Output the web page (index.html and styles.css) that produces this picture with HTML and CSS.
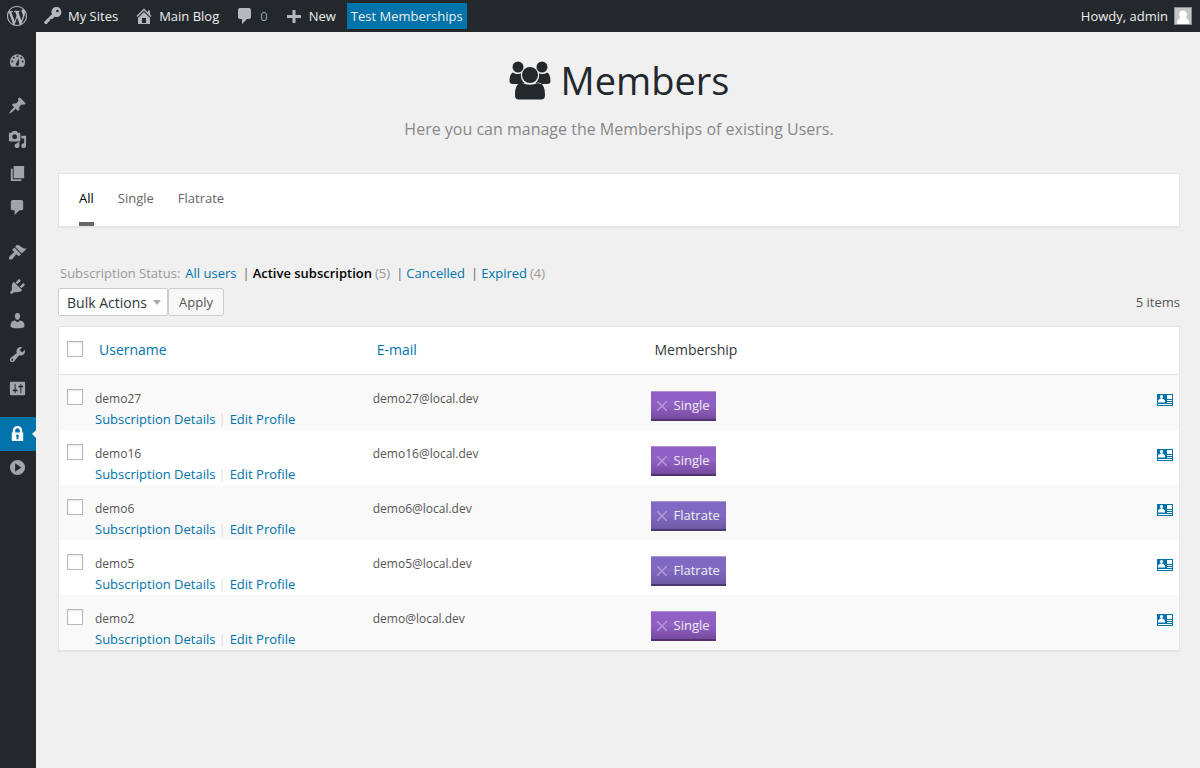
FILE: index.html
```html
<!DOCTYPE html>
<html lang="en">
<head>
<meta charset="utf-8">
<title>Members</title>
<link rel="stylesheet" href="styles.css">
</head>
<body>
<svg class="sprite" aria-hidden="true">
  <symbol id="card" viewBox="0 0 16 12"><path fill="#0073aa" d="M0 0h16v12H0z"/><path fill="#fff" d="M4.500 1a1.500 1.500 0 0 1 1 2.700L5.300 5h1.200L8 6.500V8.500H1V6.500L2.500 5h1.200l-.2-1.300a1.500 1.500 0 0 1 1-2.700zM10 1h5v4h-5zM10 6h5v1h-5zM10 8h5v1h-5zM1 10h14v1H1z"/></symbol>
  <symbol id="comment" viewBox="0 0 20 20"><path d="M5 2h9c1.100 0 2 .9 2 2v7c0 1.100-.9 2-2 2h-2l-5 5v-5H5c-1.100 0-2-.9-2-2V4c0-1.100.9-2 2-2z"/></symbol>
</svg>

<header class="adminbar">
  <nav class="bar-links" aria-label="Toolbar">
    <a class="bar-item wp" href="#" aria-label="About WordPress"><svg class="icon" viewBox="0 0 20 20"><path d="M20 10c0-5.510-4.490-10-10-10C4.480 0 0 4.490 0 10c0 5.520 4.480 10 10 10 5.510 0 10-4.480 10-10zM7.780 15.370L4.370 6.220c.55-.02 1.170-.08 1.170-.08.5-.06.44-1.130-.06-1.110 0 0-1.450.11-2.370.11-.18 0-.37 0-.58-.01C4.120 2.690 6.870 1.110 10 1.110c2.330 0 4.450.87 6.050 2.340-.68-.11-1.650.39-1.650 1.580 0 .74.45 1.360.9 2.100.35.61.55 1.360.55 2.460 0 1.490-1.400 5-1.400 5l-3.030-8.370c.54-.02.82-.17.82-.17.5-.05.44-1.250-.06-1.220 0 0-1.440.12-2.380.12-.87 0-2.330-.12-2.330-.12-.5-.03-.56 1.200-.06 1.220l.92.08 1.260 3.410zM17.410 10c.24-.64.74-1.870.43-4.250.7 1.290 1.050 2.710 1.050 4.250 0 3.290-1.730 6.240-4.400 7.780.97-2.590 1.940-5.200 2.920-7.780zM6.100 18.090C3.120 16.650 1.110 13.530 1.110 10c0-1.300.23-2.480.72-3.590C3.250 10.300 4.670 14.200 6.100 18.090zm4.030-6.630l2.580 6.980c-.86.29-1.760.45-2.710.45-.79 0-1.570-.11-2.290-.33.81-2.380 1.620-4.740 2.420-7.100z"/></svg></a>
    <a class="bar-item" href="#"><svg class="icon" viewBox="0 0 20 20"><path fill-rule="evenodd" d="M16.950 2.580c1.960 1.950 1.960 5.120 0 7.070-1.510 1.510-3.750 1.840-5.590 1.010l-1.870 2.310-2.490.31L6.500 15.500l-1.500.5-1 2H2l-1-2 7.950-7.690c-.92-1.870-.62-4.180.93-5.730 1.950-1.960 5.120-1.960 7.070 0zm-2.510 3.790c.74 0 1.330-.6 1.330-1.340 0-.73-.59-1.330-1.330-1.330-.73 0-1.330.6-1.330 1.330 0 .74.6 1.340 1.330 1.340z"/></svg>My Sites</a>
    <a class="bar-item" href="#"><svg class="icon" viewBox="0 0 20 20"><path fill-rule="evenodd" d="M16 8.500l1.530 1.530-1.060 1.060L10 4.600l-6.470 6.490-1.060-1.060L10 2.500l4 4v-2h2v4zm-6-2.460l6 5.990V18H4v-5.970zM12 17v-5H8v5h4z"/></svg>Main Blog</a>
    <a class="bar-item quiet" href="#" aria-label="0 comments"><svg class="icon"><use href="#comment"/></svg>0</a>
    <a class="bar-item" href="#"><svg class="icon" viewBox="0 0 20 20"><path d="M8.500 4h3v5H17v3h-5.500v5h-3v-5H3V9h5.500z"/></svg>New</a>
    <a class="bar-test" href="#">Test Memberships</a>
  </nav>
  <a class="account" href="#">Howdy, admin
    <svg class="avatar" viewBox="0 0 18 18"><path fill="#8c8f92" d="M0 0h18v18H0z"/><path fill="#c5c5c5" d="M1 1h16v16H1z"/><path fill="#fff" d="M9 3.500c2.600 0 3.900 1.700 3.900 4 0 1.700-.6 2.800-1.400 3.500 2.600.7 3.500 2.600 3.500 6H3c0-3.400.9-5.300 3.500-6-.8-.7-1.400-1.800-1.400-3.500 0-2.300 1.300-4 3.900-4z"/></svg></a>
</header>

<div class="shell">
  <nav class="sidebar" aria-label="Main menu">
    <div class="group">
      <a href="#" aria-label="Dashboard"><svg class="icon" viewBox="0 0 20 20"><path fill-rule="evenodd" d="M3.760 16.500h12.480A8 8 0 0 0 18 11.500a8 8 0 1 0-16 0c0 1.900.66 3.640 1.760 5zM10 4.500a1 1 0 1 1 0 2 1 1 0 0 1 0-2zM6 6a1 1 0 1 1 0 2 1 1 0 0 1 0-2zm8 0a1 1 0 1 1 0 2 1 1 0 0 1 0-2zM4.500 10a1 1 0 1 1 0 2 1 1 0 0 1 0-2zm11 0a1 1 0 1 1 0 2 1 1 0 0 1 0-2zm-3.800-2.500l-.1 6.200c.1 1.100-.7 1.900-1.700 1.900-1.100 0-1.900-.9-1.700-2 .1-.5.300-.8.600-1z"/></svg></a>
    </div>
    <div class="group">
      <a href="#" aria-label="Posts"><svg class="icon" viewBox="0 0 20 20"><path d="M10.440 3.020l1.820-1.820 6.360 6.350-1.830 1.820c-1.050-.68-2.480-.57-3.410.36l-.75.75c-.92.93-1.040 2.350-.35 3.410l-1.830 1.820-2.410-2.410-2.800 2.790c-.42.42-3.380 2.710-3.800 2.290s1.860-3.390 2.280-3.810l2.790-2.790L4.100 9.360l1.830-1.820c1.050.69 2.480.57 3.400-.36l.75-.75c.93-.92 1.050-2.350.36-3.410z"/></svg></a>
      <a href="#" aria-label="Media"><svg class="icon" viewBox="0 0 20 20"><path fill-rule="evenodd" d="M13 11V4c0-.55-.45-1-1-1h-1.670L9 1H5L3.670 3H2c-.55 0-1 .45-1 1v7c0 .55.45 1 1 1h10c.55 0 1-.45 1-1zM7 4.500c1.380 0 2.500 1.120 2.500 2.500S8.380 9.500 7 9.500 4.500 8.380 4.500 7 5.620 4.500 7 4.500zM14 6h5v10.500c0 1.380-1.120 2.500-2.500 2.500S14 17.880 14 16.500s1.120-2.500 2.500-2.500c.17 0 .34.02.5.05V9h-3V6zm-4 8.050V13h2v3.500c0 1.380-1.120 2.500-2.500 2.500S7 17.880 7 16.500 8.120 14 9.500 14c.17 0 .34.02.5.05z"/></svg></a>
      <a href="#" aria-label="Pages"><svg class="icon" viewBox="0 0 20 20"><path d="M6 15V2h11v13H6zm-1 1h9v2H3V5h2v11z"/></svg></a>
      <a href="#" aria-label="Comments"><svg class="icon"><use href="#comment"/></svg></a>
    </div>
    <div class="group">
      <a href="#" aria-label="Appearance"><svg class="icon" viewBox="0 0 20 20"><path d="M14.480 11.060L7.410 3.990l1.500-1.500c.5-.56 2.300-.47 3.510.32 1.210.8 1.430 1.280 2.910 2.100 1.180.64 2.450 1.260 4.450.85zm-.71.71L6.700 4.700 4.930 6.470c-.39.39-.39 1.020 0 1.410l1.060 1.060c.39.39.39 1.030 0 1.420-.6.6-1.430 1.110-2.210 1.690-.35.26-.7.53-1.010.84C1.430 14.230.4 16.080 1.400 17.070c.99 1 2.840-.03 4.180-1.360.31-.31.58-.66.85-1.020.57-.78 1.080-1.610 1.690-2.210.39-.39 1.020-.39 1.410 0l1.060 1.060c.39.39 1.020.39 1.410 0z"/></svg></a>
      <a href="#" aria-label="Plugins"><svg class="icon" viewBox="0 0 20 20"><path d="M13.110 4.360L9.870 7.600 8 5.730l3.240-3.240c.35-.34 1.050-.2 1.560.32.52.51.66 1.210.31 1.550zm-8 1.770l.91-1.120 9.010 9.010-1.190.84c-.71.71-2.630 1.160-3.820 1.160H6.140L4.900 17.260c-.59.59-1.540.59-2.120 0-.59-.58-.59-1.530 0-2.120l1.240-1.240v-3.880c0-1.130.4-3.190 1.090-3.890zm7.260 3.970l3.240-3.240c.34-.35 1.040-.21 1.550.31.52.51.66 1.210.31 1.550l-3.240 3.250z"/></svg></a>
      <a href="#" aria-label="Users"><svg class="icon" viewBox="0 0 20 20"><path d="M10 9.250c-2.270 0-2.730-3.440-2.730-3.440C7 4.020 7.820 2 9.970 2c2.160 0 2.980 2.020 2.710 3.810 0 0-.41 3.440-2.680 3.440zm0 2.570L12.720 10c2.390 0 4.520 2.330 4.520 4.530v2.490s-3.650 1.130-7.240 1.130c-3.650 0-7.240-1.130-7.240-1.130v-2.490c0-2.250 1.940-4.480 4.470-4.480z"/></svg></a>
      <a href="#" aria-label="Tools"><svg class="icon" viewBox="0 0 20 20"><path fill-rule="evenodd" d="M16.680 9.770c-1.340 1.340-3.300 1.670-4.950.99l-5.410 6.520c-.99.99-2.590.99-3.580 0s-.99-2.590 0-3.570l6.520-5.420c-.68-1.650-.35-3.610.99-4.950 1.280-1.280 3.120-1.620 4.720-1.060l-2.890 2.890 2.820 2.820 2.860-2.870c.53 1.580.18 3.390-1.080 4.650zM3.810 16.210c.4.39 1.040.39 1.430 0 .4-.4.4-1.040 0-1.430-.39-.4-1.030-.4-1.430 0-.39.39-.39 1.030 0 1.430z"/></svg></a>
      <a href="#" aria-label="Settings"><svg class="icon" viewBox="0 0 20 20"><path fill-rule="evenodd" d="M18 16V4c0-.55-.45-1-1-1H3c-.55 0-1 .45-1 1v12c0 .55.45 1 1 1h14c.55 0 1-.45 1-1zM8 11h1c.55 0 1 .45 1 1s-.45 1-1 1H8v1.500c0 .28-.22.5-.5.5s-.5-.22-.5-.5V13H6c-.55 0-1-.45-1-1s.45-1 1-1h1V5.500c0-.28.22-.5.5-.5s.5.22.5.5V11zm5-2h-1c-.55 0-1-.45-1-1s.45-1 1-1h1V5.500c0-.28.22-.5.5-.5s.5.22.5.5V7h1c.55 0 1 .45 1 1s-.45 1-1 1h-1v5.500c0 .28-.22.5-.5.5s-.5-.22-.5-.5V9z"/></svg></a>
    </div>
    <div class="group">
      <a class="current" href="#" aria-label="Membership" aria-current="page"><svg class="icon" viewBox="0 0 20 20"><path fill-rule="evenodd" d="M15 9V7A5 5 0 0 0 5 7v2H4v9h12V9zm-7.500 0V7a2.500 2.500 0 0 1 5 0v2zm3.300 4.700l.4 2.300H8.800l.4-2.300a1.500 1.500 0 1 1 1.600 0z"/></svg></a>
      <a href="#" aria-label="Collapse menu"><svg class="icon" viewBox="0 0 20 20"><path fill-rule="evenodd" d="M10 2a8 8 0 1 1 0 16 8 8 0 0 1 0-16zM7.500 5.500v9l6.500-4.500z"/></svg></a>
    </div>
  </nav>

  <main class="content">
    <div class="title">
      <h1><svg class="title-icon" viewBox="0 0 42 40"><circle cx="9" cy="7" r="5.500"/><circle cx="33" cy="7" r="5.500"/><circle cx="21" cy="15" r="8"/><path d="M4 12.500c2.500 2 6 2 8 .7-.6 4.300.8 7.500 3.600 9.800-2 0-4 .2-5.600 1H4c-2.500 0-3.500-1-3.500-3 0-4 1-7.500 3.500-8.500zM38 12.500c-2.500 2-6 2-8 .7.600 4.300-.8 7.500-3.600 9.800 2 0 4 .2 5.600 1h6c2.500 0 3.500-1 3.500-3 0-4-1-7.500-3.500-8.500zM13 22.500c5 3 11 3 16 0 5 .5 7 5 7 12.500 0 3-1 4.500-4 4.500H10c-3 0-4-1.500-4-4.500 0-7.500 2-12 7-12.500z"/></svg>Members</h1>
      <p>Here you can manage the Memberships of existing Users.</p>
    </div>

    <nav class="tabs" aria-label="Memberships">
      <a class="active" href="#">All</a>
      <a href="#">Single</a>
      <a href="#">Flatrate</a>
    </nav>

    <div class="status">
      <span class="label">Subscription Status:</span>
      <a href="#">All users</a>
      <i>|</i>
      <a class="chosen" href="#">Active subscription</a> <span>(5)</span>
      <i>|</i>
      <a href="#">Cancelled</a>
      <i>|</i>
      <a href="#">Expired</a> <span>(4)</span>
    </div>

    <div class="actions">
      <span class="select-wrap"><select aria-label="Bulk actions"><option>Bulk Actions</option></select></span>
      <button class="apply" type="button">Apply</button>
      <span class="count">5 items</span>
    </div>

    <table class="members">
      <colgroup><col class="c-check"><col class="c-data"><col class="c-data"><col><col class="c-card"></colgroup>
      <thead>
        <tr><th><input type="checkbox" aria-label="Select all"></th><th><a href="#">Username</a></th><th><a href="#">E-mail</a></th><th>Membership</th><td></td></tr>
      </thead>
      <tbody>
        <tr><td><input type="checkbox" aria-label="Select demo27"></td><td>demo27<div class="row-links"><a href="#">Subscription Details</a><i>|</i><a href="#">Edit Profile</a></div></td><td>demo27@local.dev</td><td><span class="tag single"><button type="button" aria-label="Remove Single"><svg viewBox="0 0 10 10"><path d="M0 0l10 10M10 0L0 10"/></svg></button>Single</span></td><td><a href="#" aria-label="Card of demo27"><svg class="card"><use href="#card"/></svg></a></td></tr>
        <tr><td><input type="checkbox" aria-label="Select demo16"></td><td>demo16<div class="row-links"><a href="#">Subscription Details</a><i>|</i><a href="#">Edit Profile</a></div></td><td>demo16@local.dev</td><td><span class="tag single"><button type="button" aria-label="Remove Single"><svg viewBox="0 0 10 10"><path d="M0 0l10 10M10 0L0 10"/></svg></button>Single</span></td><td><a href="#" aria-label="Card of demo16"><svg class="card"><use href="#card"/></svg></a></td></tr>
        <tr><td><input type="checkbox" aria-label="Select demo6"></td><td>demo6<div class="row-links"><a href="#">Subscription Details</a><i>|</i><a href="#">Edit Profile</a></div></td><td>demo6@local.dev</td><td><span class="tag flatrate"><button type="button" aria-label="Remove Flatrate"><svg viewBox="0 0 10 10"><path d="M0 0l10 10M10 0L0 10"/></svg></button>Flatrate</span></td><td><a href="#" aria-label="Card of demo6"><svg class="card"><use href="#card"/></svg></a></td></tr>
        <tr><td><input type="checkbox" aria-label="Select demo5"></td><td>demo5<div class="row-links"><a href="#">Subscription Details</a><i>|</i><a href="#">Edit Profile</a></div></td><td>demo5@local.dev</td><td><span class="tag flatrate"><button type="button" aria-label="Remove Flatrate"><svg viewBox="0 0 10 10"><path d="M0 0l10 10M10 0L0 10"/></svg></button>Flatrate</span></td><td><a href="#" aria-label="Card of demo5"><svg class="card"><use href="#card"/></svg></a></td></tr>
        <tr><td><input type="checkbox" aria-label="Select demo2"></td><td>demo2<div class="row-links"><a href="#">Subscription Details</a><i>|</i><a href="#">Edit Profile</a></div></td><td>demo@local.dev</td><td><span class="tag single"><button type="button" aria-label="Remove Single"><svg viewBox="0 0 10 10"><path d="M0 0l10 10M10 0L0 10"/></svg></button>Single</span></td><td><a href="#" aria-label="Card of demo2"><svg class="card"><use href="#card"/></svg></a></td></tr>
      </tbody>
    </table>
  </main>
</div>
</body>
</html>
```

FILE: styles.css
```css
* { box-sizing: border-box; }
body {
  margin: 0;
  min-height: 100vh;
  display: flex;
  flex-direction: column;
  background: #f0f0f0;
  color: #555;
  font: 13px/20px "Open Sans", sans-serif;
}
a { color: #0073aa; text-decoration: none; }
i { font-style: normal; }
.sprite { display: none; }
.icon { width: 20px; height: 20px; flex: none; fill: currentColor; }

/* Toolbar */
.adminbar {
  height: 32px;
  display: flex;
  justify-content: space-between;
  background: #23282d;
  line-height: 32px;
  font-weight: 500;
}
.bar-links { display: flex; }
.bar-item { display: flex; align-items: center; gap: 5px; padding: 0 8px; color: #eee; }
.bar-item.wp { padding: 0 8px 0 7px; }
.bar-item .icon { color: #b4b9be; }
.bar-item.quiet { color: #9a9ea2; font-weight: 400; }
.bar-test {
  margin: 3px;
  padding: 0 4px;
  background: #0073aa;
  color: #eee;
  line-height: 26px;
}
.account { display: flex; align-items: center; gap: 6px; padding-right: 8px; color: #eee; }
.avatar { width: 18px; height: 18px; }

/* Side menu */
.shell { flex: 1; display: flex; }
.sidebar {
  width: 36px;
  padding-top: 12px;
  display: flex;
  flex-direction: column;
  gap: 11px;
  background: #23282d;
}
.sidebar a {
  position: relative;
  height: 34px;
  display: flex;
  align-items: center;
  padding: 0 0 1px 8px;
  color: #a0a5aa;
}
.sidebar .icon { width: 19px; height: 19px; }
.sidebar .current { background: #0073aa; color: #fff; }
.sidebar .current::after {
  content: "";
  position: absolute;
  right: 0;
  top: 13px;
  border: 4px solid transparent;
  border-right-color: #f0f0f0;
  border-left: 0;
}

/* Page */
.content { flex: 1; padding: 21px 20px 40px 22px; }
.title { padding-bottom: 32px; text-align: center; }
.title h1 {
  margin: 0 0 10px;
  display: flex;
  justify-content: center;
  gap: 10px;
  color: #23282d;
  font-size: 38px;
  font-weight: 400;
  line-height: 54px;
}
.title-icon { width: 42px; height: 40px; margin-top: 7px; fill: currentColor; }
.title p { margin: 0; color: #888; font-size: 16px; line-height: 24px; }

.tabs {
  display: flex;
  gap: 24px;
  min-height: 54px;
  margin-bottom: 36px;
  padding: 0 20px;
  background: #fff;
  border: 1px solid #e5e5e5;
  box-shadow: 0 1px 1px #0000000a;
}
.tabs a { padding-top: 14px; border-bottom: 4px solid transparent; color: #666; }
.tabs .active { border-color: #666; color: #000; }

.status { display: flex; gap: 3px; padding-left: 2px; margin-bottom: 5px; color: #999; }
.status .label { padding-right: 2px; }
.status i { padding-left: 3px; color: #666; }
.status .chosen { color: #000; font-weight: 600; }

.actions { display: flex; align-items: center; margin-bottom: 10px; }
.select-wrap { position: relative; }
.select-wrap::after {
  content: "";
  position: absolute;
  right: 7px;
  top: 12px;
  border: 4px solid transparent;
  border-top: 5px solid #aaa;
  border-bottom: 0;
  pointer-events: none;
}
.select-wrap, .apply { display: flex; height: 28px; }
select {
  width: 110px;
  padding: 0 8px;
  appearance: none;
  border: 1px solid #ccc;
  border-radius: 2px;
  background: #fff;
  color: #32373c;
  font: 14px "Open Sans", sans-serif;
}
.apply {
  align-items: center;
  padding: 0 10px;
  border: 1px solid #ccc;
  border-radius: 3px;
  background: #f7f7f7;
  color: #555;
  font: 13px "Open Sans", sans-serif;
}
.count { margin-left: auto; }

/* Members */
.members {
  width: 100%;
  table-layout: fixed;
  border-spacing: 0;
  background: #fff;
  border: 1px solid #e5e5e5;
  box-shadow: 0 1px 1px #0000000a;
}
.c-check { width: 28px; }
.c-data { width: 24.8%; }
.c-card { width: 34px; }
.members th {
  height: 48px;
  padding: 0 12px 2px;
  border-bottom: 1px solid #e1e1e1;
  color: #32373c;
  font-size: 14px;
  font-weight: 400;
  text-align: left;
}
.members thead td { border-bottom: 1px solid #e1e1e1; }
.members tbody td {
  height: 55px;
  padding: 13px 8px 0;
  vertical-align: top;
  font-size: 12px;
  line-height: 21px;
}
.members tbody tr:nth-child(odd) { background: #f9f9f9; }
.members tr > :first-child { padding-left: 8px; padding-right: 0; }
.row-links { font-size: 13px; }
.row-links i { margin: 0 4px 0 3px; color: #ddd; }
.members input {
  display: block;
  width: 16px;
  height: 16px;
  margin: 1px 0 0;
  appearance: none;
  border: 1px solid #b4b9be;
  background: #fff;
  box-shadow: inset 0 1px 2px #0000001a;
}
.members th input { margin: 0 0 2px; }
.tag {
  display: inline-flex;
  align-items: center;
  gap: 7px;
  height: 30px;
  margin-top: 3px;
  padding: 0 6px;
  border-top: 1px solid #b193d4;
  border-bottom: 2px solid #533070;
  color: #eee;
  font-size: 13px;
  font-weight: 500;
}
.single { background: linear-gradient(#9160c4 50%, #764b9f); }
.flatrate { background: linear-gradient(#7f69c2 50%, #6d5aa5); border-bottom-color: #483a70; }
.tag button { display: flex; padding: 0; border: 0; background: none; }
.tag svg { width: 10px; height: 10px; stroke: #b79bd8; stroke-width: 1.4; fill: none; }
.card { display: block; width: 16px; height: 12px; margin: 6px 0 0 4px; }
```
